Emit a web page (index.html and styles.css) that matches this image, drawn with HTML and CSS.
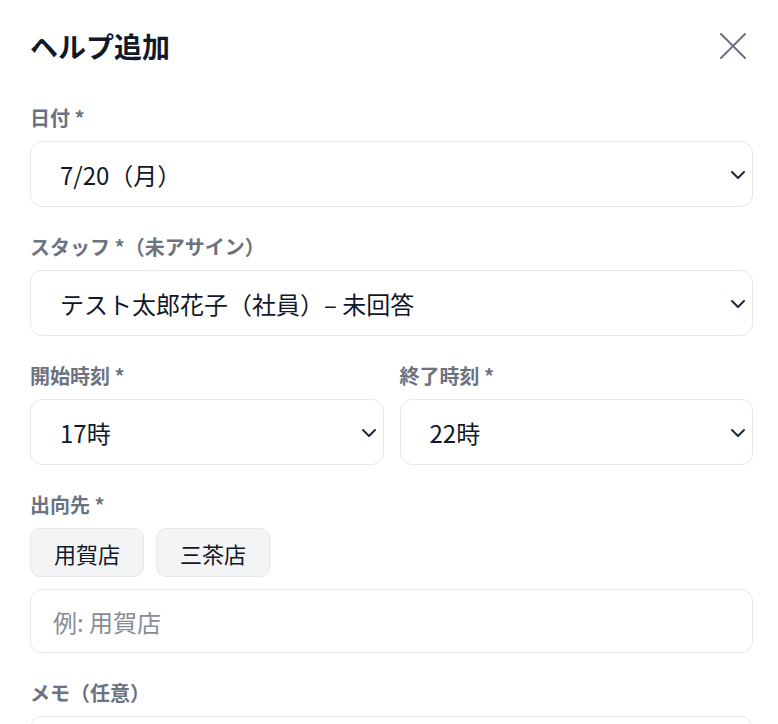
FILE: index.html
```html
<!DOCTYPE html>
<html lang="ja">
<head>
  <meta charset="UTF-8">
  <meta name="viewport" content="width=device-width, initial-scale=1.0">
  <title>ヘルプ追加</title>
  <link rel="stylesheet" href="styles.css">
</head>
<body>
  <div class="modal">
    <div class="modal-header">
      <div class="modal-title">ヘルプ追加</div>
      <button class="close-button" aria-label="閉じる">
        <svg width="26" height="26" viewBox="0 0 26 26" fill="none" stroke="#6b7280" stroke-width="2" stroke-linecap="round">
          <path d="M1 1L25 25M25 1L1 25"/>
        </svg>
      </button>
    </div>

    <div class="field">
      <div class="field-label">日付 *</div>
      <div class="select-box">
        <span class="select-text">7/20（月）</span>
        <svg class="chevron" width="16" height="10" viewBox="0 0 16 10" fill="none" stroke="#1f2937" stroke-width="2" stroke-linecap="round" stroke-linejoin="round"><path d="M2 2l6 6 6-6"/></svg>
      </div>
    </div>

    <div class="field">
      <div class="field-label">スタッフ *（未アサイン）</div>
      <div class="select-box">
        <span class="select-text">テスト太郎花子（社員）– 未回答</span>
        <svg class="chevron" width="16" height="10" viewBox="0 0 16 10" fill="none" stroke="#1f2937" stroke-width="2" stroke-linecap="round" stroke-linejoin="round"><path d="M2 2l6 6 6-6"/></svg>
      </div>
    </div>

    <div class="field-row">
      <div class="field">
        <div class="field-label">開始時刻 *</div>
        <div class="select-box">
          <span class="select-text">17時</span>
          <svg class="chevron" width="16" height="10" viewBox="0 0 16 10" fill="none" stroke="#1f2937" stroke-width="2" stroke-linecap="round" stroke-linejoin="round"><path d="M2 2l6 6 6-6"/></svg>
        </div>
      </div>
      <div class="field">
        <div class="field-label">終了時刻 *</div>
        <div class="select-box">
          <span class="select-text">22時</span>
          <svg class="chevron" width="16" height="10" viewBox="0 0 16 10" fill="none" stroke="#1f2937" stroke-width="2" stroke-linecap="round" stroke-linejoin="round"><path d="M2 2l6 6 6-6"/></svg>
        </div>
      </div>
    </div>

    <div class="field">
      <div class="field-label">出向先 *</div>
      <div class="chip-list">
        <button class="chip">用賀店</button>
        <button class="chip">三茶店</button>
      </div>
      <input class="text-input" placeholder="例: 用賀店">
    </div>

    <div class="field">
      <div class="field-label">メモ（任意）</div>
      <textarea class="memo-input"></textarea>
    </div>
  </div>
</body>
</html>
```

FILE: styles.css
```css
body {
  margin: 0;
  padding: 0;
  font-family: "Noto Sans CJK JP", "Noto Sans", sans-serif;
  background-color: #fff;
  color: #111827;
}

.modal {
  padding: 26px 25px 0 30px;
}

.modal-header {
  display: flex;
  justify-content: space-between;
  align-items: center;
  height: 40px;
  margin-bottom: 40px;
}

.modal-title {
  font-size: 28px;
  font-weight: 700;
  color: #111827;
}

.close-button {
  display: flex;
  align-items: center;
  justify-content: center;
  width: 30px;
  height: 30px;
  margin-right: 5px;
  padding: 0;
  border: 0;
  background: none;
}

.field {
  margin-bottom: 28px;
}

.field-label {
  font-size: 20px;
  font-weight: 700;
  line-height: 24px;
  color: #6b7280;
  margin-bottom: 11px;
}

.select-box {
  display: flex;
  align-items: center;
  justify-content: space-between;
  height: 64px;
  padding: 0 6px 0 29px;
  border: 1px solid #e5e7eb;
  border-radius: 12px;
  background-color: #fff;
}

.select-text {
  font-size: 24px;
  color: #111827;
}

.chevron {
  margin-top: 2px;
}

.field-row {
  display: grid;
  grid-template-columns: 1fr 1fr;
  column-gap: 16px;
}

.chip-list {
  display: flex;
  gap: 12px;
  margin-bottom: 12px;
}

.chip {
  height: 49px;
  padding: 0 23px;
  font-family: inherit;
  font-size: 22px;
  color: #111827;
  background-color: #f3f4f6;
  border: 1px solid #e5e7eb;
  border-radius: 10px;
}

.text-input {
  display: block;
  box-sizing: border-box;
  width: 100%;
  height: 64px;
  padding: 0 22px;
  font-family: inherit;
  font-size: 24px;
  color: #111827;
  border: 1px solid #e5e7eb;
  border-radius: 12px;
  outline: none;
}

.text-input::placeholder {
  color: #878c95;
}

.memo-input {
  display: block;
  box-sizing: border-box;
  width: 100%;
  height: 120px;
  padding: 16px 22px;
  font-family: inherit;
  font-size: 22px;
  border: 1px solid #e5e7eb;
  border-radius: 12px;
  outline: none;
  resize: none;
}
```
